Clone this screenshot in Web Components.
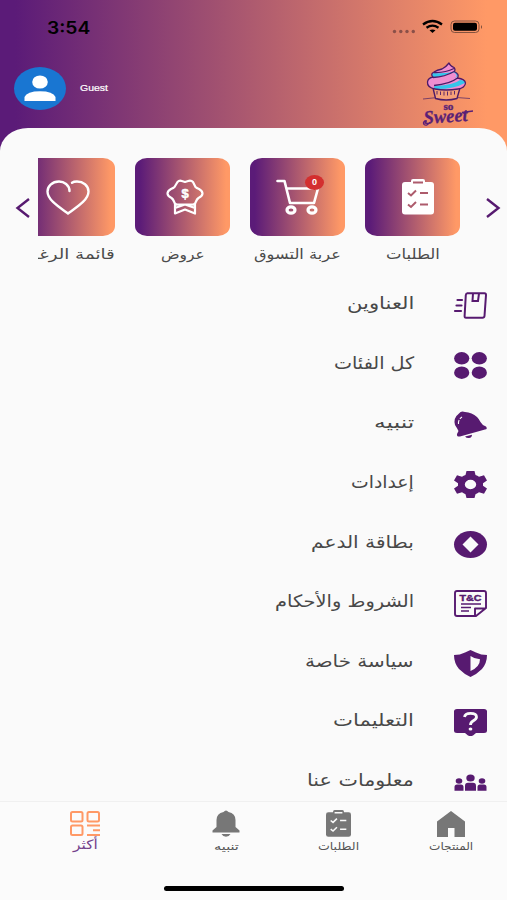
<!DOCTYPE html>
<html lang="ar">
<head>
<meta charset="utf-8">
<title>So Sweet</title>
<style>
    body {
        margin: 0;
        font-family: "DejaVu Sans", "Noto Sans", sans-serif;
    }
</style>
</head>
<body>
<more-screen></more-screen>
<script>
// one drawing per icon: [viewBox width, viewBox height, markup]
const icons = {
    heart: [44, 35, `<path d="M23.500 11C23.500 5 18 1.500 13 1.500C6 1.500 1.500 6.500 1.500 11.500C1.500 20 13 27 22 33.500C31 27 42.500 20 42.500 11.500C42.500 5.500 37 1.500 31 1.500C28.500 1.500 27 2 26 2.700" fill="none" stroke="#fff" stroke-width="2.400" stroke-linecap="round"/>`],
    offer: [38, 36, `<path d="M11.500 3Q13 1.400 15 1.800L19 3L23 1.800Q25.500 1.400 27 3L29.500 8Q30.500 9 33 10Q36.500 12 36.500 14.500Q36.500 17 32.500 19Q31 20 30 22.500Q29 26 26 25.500H12Q9 26 8 22.500Q7 20 5.500 19Q1.500 17 1.500 14.500Q1.500 12 5 10Q7.500 9 8.500 8ZM9 25V34.500L19 30.500L29 34.500V25M9 29L19 25.500L29 29" fill="none" stroke="#fff" stroke-width="2.200" stroke-linejoin="round"/><text x="19" y="19" font-size="13" font-weight="bold" text-anchor="middle" fill="#fff" stroke="#fff" stroke-width=".5" font-family="Liberation Sans">$</text>`],
    cart: [43, 36, `<g fill="none" stroke="#fff" stroke-width="2.600" stroke-linecap="round" stroke-linejoin="round"><path d="M1.500 2H8.500L14 24H38L42 9.500H11"/><ellipse cx="15" cy="31" rx="4" ry="3.200" stroke-width="3.200"/><ellipse cx="36" cy="31" rx="4" ry="3.200" stroke-width="3.200"/></g>`],
    clipboard: [32, 36, `<rect y="3" width="32" height="32.500" rx="3" fill="currentColor"/><rect x="9" y="0" width="14" height="6" rx="2" fill="currentColor"/><path d="M11 3.500H21M6 14L9 16.500L14 11.500M6 25.500L9 28L14 23M18 14H26M18 25.500H26" fill="none" stroke="var(--hole, #ad5b6c)" stroke-width="2"/>`],
    address: [33, 27, `<path d="M13 1.200H30.500Q32 1.200 32 3L30.500 24Q30.300 25.700 28.500 25.700H12Q10.500 25.700 10.600 24L11.800 3Q12 1.200 13.500 1.200ZM19 1.500L18.500 9H24L25 1.500" fill="none" stroke="currentColor" stroke-width="2"/><path d="M3.500 8H8M2.500 13.500H7.500M1 19H7" stroke="currentColor" stroke-width="2.200" stroke-linecap="round"/>`],
    grid: [33, 27, `<g fill="currentColor"><ellipse cx="7.700" cy="6.300" rx="7.600" ry="6.200"/><ellipse cx="25.300" cy="6.300" rx="7.600" ry="6.200"/><ellipse cx="7.700" cy="20.700" rx="7.600" ry="6.200"/><ellipse cx="25.300" cy="20.700" rx="7.600" ry="6.200"/></g>`],
    tilted: [33, 27, `<path d="M5 2.500Q7-.5 11 1Q18 1.500 23 6Q25 8 26.500 11Q28 14 32 15.500Q34 18 31 18.500L6 25.500Q2.500 26 3 23L4.500 20Q3 17 1 14Q-1 7 5 2.500Z" fill="currentColor"/><path d="M11 25.500L18 23.700Q18 26.800 15 27Q12.500 27.200 11 25.500Z" fill="currentColor"/><path d="M4.500 13Q4 8.500 8 6" fill="none" stroke="#fafafa" stroke-width="1.100" stroke-dasharray="4 1.500"/>`],
    gear: [33, 27, `<path fill="currentColor" fill-rule="evenodd" d="M12.500 0H20.500L21.500 4Q23.500 4.700 25 5.700L30 4.200L33 9.500L29 12.300V14.800L33 17.600L30 22.800L25 21.300Q23.500 22.500 21.500 23.200L20.500 27H12.500L11.500 23.200Q9.500 22.500 8 21.300L3 22.800L0 17.600L4 14.800V12.300L0 9.500L3 4.200L8 5.700Q9.500 4.700 11.500 4ZM16.500 8.800A5.700 4.700 0 1 0 16.500 18.200A5.700 4.700 0 1 0 16.500 8.800Z"/>`],
    support: [33, 27, `<ellipse cx="16.500" cy="13.500" rx="16.500" ry="13.500" fill="currentColor"/><path d="M16.500 5.500L24.500 13.500L16.500 21.500L8.500 13.500Z" fill="#fafafa"/>`],
    terms: [33, 27, `<path d="M1 3Q1 1 3 1H30Q32 1 32 3V18L22 26H3Q1 26 1 24ZM21 25.500V18.500H31.500" fill="none" stroke="currentColor" stroke-width="1.900" stroke-linejoin="round"/><path d="M7 14H27M7 17.500H17M7 21H15" stroke="currentColor" stroke-width="1.300"/><text x="5.500" y="10.800" font-size="8.500" font-weight="bold" textLength="22" lengthAdjust="spacingAndGlyphs" fill="currentColor" stroke="currentColor" stroke-width=".4" font-family="Liberation Sans">T&amp;C</text>`],
    shield: [33, 27, `<path d="M16.500 0L22 2.500Q27 5 33 5Q33 13 28 19Q23 24 16.500 27Q10 24 5 19Q0 13 0 5Q6 5 11 2.500Z" fill="currentColor"/><path d="M16.500 6Q20.500 9 26 9.300Q26 17 16.500 21Z" fill="#fafafa"/>`],
    help: [33, 27, `<path d="M3 0H30Q33 0 33 2.500V21.500Q33 24 30 24H22L19 26.500Q16.500 27.700 14 26.500L11 24H3Q0 24 0 21.500V2.500Q0 0 3 0Z" fill="currentColor"/><path d="M10.500 8Q11 4.300 16.500 4.300Q22.500 4.300 22.500 8Q22.500 10 19 12Q16.500 13.500 16.500 16" fill="none" stroke="#fafafa" stroke-width="2.800"/><ellipse cx="16.500" cy="20" rx="1.900" ry="1.600" fill="#fafafa"/>`],
    people: [33, 27, `<g fill="currentColor"><ellipse cx="16.500" cy="9" rx="4.200" ry="3.500"/><ellipse cx="5" cy="12" rx="3.300" ry="2.700"/><ellipse cx="28" cy="12" rx="3.300" ry="2.700"/><path d="M11 21.700V17Q11 13.700 14 13.700H19Q22 13.700 22 17V21.700ZM.5 21.700V18Q.5 15.500 3 15.500H7Q9.500 15.500 9.500 18V21.700ZM23.500 21.700V18Q23.500 15.500 26 15.500H30Q32.500 15.500 32.500 18V21.700Z"/></g>`],
    more: [30, 25, `<g fill="none" stroke="currentColor" stroke-width="2"><rect x="1" y="1" width="11.500" height="9.500" rx="1.500"/><rect x="17.500" y="1" width="11.500" height="9.500" rx="1.500"/><rect x="1" y="14.500" width="11.500" height="9.500" rx="1.500"/><path d="M17 14.500H30M23 19.300H30M17 24H30"/></g>`],
    bell: [28, 27, `<path d="M11.500 2Q14-1 16.500 2Q23.500 3.500 23.500 10V17L27.500 20.500V22.500H.5V20.500L4.500 17V10Q4.500 3.500 11.500 2ZM9.500 24H18.500Q17 26.800 14 26.800Q11 26.800 9.500 24Z" fill="currentColor"/>`],
    home: [28, 26, `<path d="M14 0L28 10.500V26H17.500V17H11V26H0V10.500Z" fill="currentColor"/>`],
    prev: [14, 20, `<path d="M13 1L1.500 10L13 19" fill="none" stroke="currentColor" stroke-width="2.400"/>`],
    next: [14, 20, `<path d="M1 1L12.500 10L1 19" fill="none" stroke="currentColor" stroke-width="2.400"/>`],
    avatar: [52, 43, `<ellipse cx="26" cy="21.500" rx="26" ry="21.500" fill="#1976d2"/><ellipse cx="26" cy="15" rx="7.800" ry="6.600" fill="#fff"/><path d="M10.500 34V30Q13 24.300 26 24.300Q39 24.300 41.500 30V34Z" fill="#fff"/>`],
    signal: [88, 14, `<g fill="#8a5048"><circle cx="2.500" cy="11.500" r="1.700"/><circle cx="8.800" cy="11.500" r="1.700"/><circle cx="15" cy="11.500" r="1.700"/><circle cx="21.300" cy="11.500" r="1.700"/></g><path d="M31 4.500Q40.500-2.500 50 4.500M34.500 7.700Q40.500 3.500 46.500 7.700" fill="none" stroke="#000" stroke-width="2.300"/><path d="M37.500 10.300Q40.500 8.500 43.500 10.300L40.500 13Z"/><rect x="59" y="1" width="28" height="11.500" rx="3.500" fill="none" stroke="#764b3a" stroke-width=".9"/><rect x="61" y="2.700" width="24" height="8.100" rx="2"/><path d="M89 5V9Q91 7 89 5Z" fill="#764b3a"/>`],
    logo: [54, 66, `
        <path d="M3 37Q25 34 50 36.500" stroke="#5d2d66" stroke-width=".8" fill="none"/>
        <path d="M13 26L15.500 36.500Q26 39.500 37 36.500L40 26Z" fill="#f5a078" stroke="#4c1a68" stroke-width="1.400"/>
        <path d="M17 29V32.500M20.500 29.500V33M24 29.500V33.500M27.500 29.500V33.500M31 29.500V33M34.500 29V32.500" stroke="#4c1a68" stroke-width=".9"/>
        <path d="M29 1Q30 4 34 5.500Q36 8 34 9.500Q40 12 37.500 16Q45 17 45.500 21Q45 26 38 27Q26 29 15 27Q7 25.500 7.500 20Q8 16 13 15Q10 12 14 10Q17 8 22 7Q26 5 29 1Z" fill="#f18ed0"/>
        <path d="M13 11Q26 12 35 9.500Q39 12 37.500 15Q25 17 12 20Q8 18 13 15Q11 13 13 11ZM15 24Q34 23 40 18Q46 18 45 21Q34 27 17 27Q12 26 15 24Z" fill="#34c5ea"/>
        <path d="M12 16Q24 14 34 10.500Q38 13 36 15Q26 21 9 21.500Q7 18 12 16Z" fill="#f18ed0"/>
        <path d="M29 1Q30 4 34 5.500Q36 8 34 9.500Q40 12 37.500 16Q45 17 45.500 21Q45 26 38 27Q26 29 15 27Q7 25.500 7.500 20Q8 16 13 15Q10 12 14 10Q17 8 22 7Q26 5 29 1ZM14 10.500Q25 11 34 6.500M13 15.500Q25 15 34 9.500M14 23.500Q30 22 37.500 16" fill="none" stroke="#4c1a68" stroke-width="1.300" stroke-linejoin="round"/>
        <g fill="#5a1f76" stroke="#5a1f76" stroke-width=".3" font-family="Liberation Serif" font-weight="bold">
            <text x="23.500" y="48" font-size="10" textLength="10" lengthAdjust="spacingAndGlyphs">so</text>
            <text x="4" y="62" font-size="19" font-style="italic" textLength="44" lengthAdjust="spacingAndGlyphs" transform="rotate(-4 4 62)">Sweet</text>
        </g>
        <path d="M42 50.500L53 49M7 59Q2 59 4 62.500Q7 64.500 10 60" fill="none" stroke="#5a1f76" stroke-width="1.300"/>`],
};

class UiIcon extends HTMLElement {
    connectedCallback() {
        const [w, h, body] = icons[this.getAttribute('name')];
        const width = this.getAttribute('w') || w;
        const height = this.getAttribute('h') || h;
        this.attachShadow({ mode: "open" }).innerHTML = /*html*/`
            <style>
                :host { display: block; flex: none; width: ${width}px; height: ${height}px; }
                svg { display: block; width: 100%; height: 100%; overflow: visible; }
            </style>
            <svg viewBox="0 0 ${w} ${h}" preserveAspectRatio="none">${body}</svg>
        `;
    }
}

// label that stretches its text to the width given in "w"
class FitLabel extends HTMLElement {
    connectedCallback() {
        const w = Number(this.getAttribute('w'));
        this.attachShadow({ mode: "open" }).innerHTML = /*html*/`
            <style>
                :host { display: block; flex: none; width: ${w}px; direction: ltr; white-space: nowrap; }
                span { display: inline-block; transform-origin: 0 50%; }
            </style>
            <span dir="auto"><slot></slot></span>
        `;
        const span = this.shadowRoot.querySelector('span');
        span.style.transform = `scaleX(${w / span.offsetWidth})`;
    }
}

class TopHeader extends HTMLElement {
    constructor() {
        super();
        this.attachShadow({ mode: "open" }).innerHTML = /*html*/`
            <style>
                :host { display: block; height: 128px; }
                .status {
                    display: flex;
                    justify-content: space-between;
                    padding: 17px 27px 0 47px;
                    height: 22px;
                    font: 600 17px/22px Inter, sans-serif;
                }
                .status ui-icon { margin-top: 3px; }
                .user {
                    display: flex;
                    align-items: flex-start;
                    padding: 23px 33px 0 14px;
                }
                .avatar { margin-top: 5px; }
                .name {
                    margin: 19px auto 0 14px;
                    color: #fff;
                    font: 9px/14px "Liberation Sans", sans-serif;
                    -webkit-text-stroke: .2px #fff;
                }
            </style>
            <div class="status">
                <fit-label w="43">3:54</fit-label>
                <ui-icon name="signal"></ui-icon>
            </div>
            <div class="user">
                <ui-icon class="avatar" name="avatar"></ui-icon>
                <fit-label class="name" w="28">Guest</fit-label>
                <ui-icon name="logo"></ui-icon>
            </div>
        `;
    }
}

class ShortcutCard extends HTMLElement {
    connectedCallback() {
        const badge = this.getAttribute('badge');
        this.attachShadow({ mode: "open" }).innerHTML = /*html*/`
            <style>
                :host { display: flex; flex-direction: column; align-items: center; flex: none; width: 95px; }
                :host([long]) { align-items: flex-start; }
                .tile {
                    position: relative;
                    display: flex;
                    align-items: center;
                    justify-content: center;
                    width: 95px;
                    height: 78px;
                    border-radius: 12px / 10px;
                    background: linear-gradient(90deg, #5b1b78 5%, #ff9966 96%);
                    color: #fff;
                }
                .tile ui-icon { translate: var(--shift, 0) 0; }
                .badge {
                    position: absolute;
                    left: 55px;
                    top: 17px;
                    width: 19px;
                    height: 15px;
                    border-radius: 50%;
                    background: #d32f2f;
                    font: bold 9px/15px "Liberation Sans", sans-serif;
                    text-align: center;
                }
                .label { margin-top: 7px; font-size: 14px; line-height: 22px; color: #4b4b4b; }
            </style>
            <div class="tile">
                <ui-icon name="${this.getAttribute('icon')}"></ui-icon>
                ${badge ? `<span class="badge">${badge}</span>` : ''}
            </div>
            <fit-label class="label" w="${this.getAttribute('w')}">${this.textContent}</fit-label>
        `;
    }
}

class ShortcutStrip extends HTMLElement {
    constructor() {
        super();
        this.attachShadow({ mode: "open" }).innerHTML = /*html*/`
            <style>
                :host {
                    display: flex;
                    justify-content: space-between;
                    padding: 30px 7px 0 16px;
                    height: 114px;
                    color: #571a70;
                }
                .arrow { margin-top: 40px; }
                .track {
                    display: flex;
                    direction: rtl;
                    gap: 20px;
                    width: 422px;
                    margin: 0 26px 0 8px;
                    overflow: hidden;
                }
            </style>
            <ui-icon class="arrow" name="prev"></ui-icon>
            <div class="track"><slot></slot></div>
            <ui-icon class="arrow" name="next"></ui-icon>
        `;
    }
}

class MenuRow extends HTMLElement {
    connectedCallback() {
        this.attachShadow({ mode: "open" }).innerHTML = /*html*/`
            <style>
                :host {
                    display: flex;
                    justify-content: flex-end;
                    gap: 40px;
                    height: 59.65px;
                    padding-right: 20.5px;
                    color: #571a70;
                }
                .label { font-size: 17px; line-height: 24px; margin-top: -1px; color: #484848; }
            </style>
            <fit-label class="label" w="${this.getAttribute('w')}">${this.textContent}</fit-label>
            <ui-icon name="${this.getAttribute('icon')}"></ui-icon>
        `;
    }
}

class TabItem extends HTMLElement {
    connectedCallback() {
        this.attachShadow({ mode: "open" }).innerHTML = /*html*/`
            <style>
                :host { display: flex; flex-direction: column; align-items: center; color: #777; }
                :host([active]) { color: #ff9966; }
                .pic { display: flex; align-items: center; height: 27px; --hole: #fafafa; }
                .label { font-size: 11px; line-height: 18px; margin-top: 1px; color: #555; }
                :host([active]) .label { color: #74418b; font-size: 13px; margin-top: -1px; }
            </style>
            <div class="pic"><ui-icon name="${this.getAttribute('icon')}" ${this.hasAttribute('narrow') ? 'w="25" h="27"' : ''}></ui-icon></div>
            <fit-label class="label" w="${this.getAttribute('w')}">${this.textContent}</fit-label>
        `;
    }
}

class TabBar extends HTMLElement {
    constructor() {
        super();
        this.attachShadow({ mode: "open" }).innerHTML = /*html*/`
            <style>
                :host { display: block; height: 99px; background: #fbfbfb; border-top: 1px solid #f0f0f0; box-sizing: border-box; }
                .tabs { display: grid; grid-template-columns: 170px 112px 113px 112px; height: 76px; padding-top: 8px; box-sizing: border-box; }
                .home { width: 180px; height: 5px; margin: 8px auto 0 164px; border-radius: 3px; background: #000; }
            </style>
            <div class="tabs"><slot></slot></div>
            <div class="home"></div>
        `;
    }
}

class MoreScreen extends HTMLElement {
    constructor() {
        super();
        this.attachShadow({ mode: "open" }).innerHTML = /*html*/`
            <style>
                :host {
                    display: flex;
                    flex-direction: column;
                    width: 507px;
                    height: 900px;
                    overflow: hidden;
                    background: linear-gradient(90deg, #5b1b78 3%, #ff9966 96%);
                }
                main {
                    flex: 1;
                    min-height: 0;
                    overflow: hidden;
                    border-radius: 28px 28px 0 0 / 23px 23px 0 0;
                    background: #fafafa;
                }
                .list { margin-top: 20px; }
            </style>
            <top-header></top-header>
            <main>
                <shortcut-strip>
                    <shortcut-card icon="clipboard" w="54" style="--shift: 5px">الطلبات</shortcut-card>
                    <shortcut-card icon="cart" w="87" badge="0">عربة التسوق</shortcut-card>
                    <shortcut-card icon="offer" w="44" style="--shift: 2px">عروض</shortcut-card>
                    <shortcut-card icon="heart" w="104" long>قائمة الرغبات</shortcut-card>
                </shortcut-strip>
                <div class="list">
                    <menu-row icon="address" w="67">العناوين</menu-row>
                    <menu-row icon="grid" w="80">كل الفئات</menu-row>
                    <menu-row icon="tilted" w="40">تنبيه</menu-row>
                    <menu-row icon="gear" w="63">إعدادات</menu-row>
                    <menu-row icon="support" w="103">بطاقة الدعم</menu-row>
                    <menu-row icon="terms" w="139">الشروط والأحكام</menu-row>
                    <menu-row icon="shield" w="109">سياسة خاصة</menu-row>
                    <menu-row icon="help" w="81">التعليمات</menu-row>
                    <menu-row icon="people" w="107">معلومات عنا</menu-row>
                </div>
            </main>
            <tab-bar>
                <tab-item icon="more" w="25" active>أكثر</tab-item>
                <tab-item icon="bell" w="25">تنبيه</tab-item>
                <tab-item icon="clipboard" w="41" narrow>الطلبات</tab-item>
                <tab-item icon="home" w="44">المنتجات</tab-item>
            </tab-bar>
        `;
    }
}

customElements.define("ui-icon", UiIcon);
customElements.define("fit-label", FitLabel);
customElements.define("top-header", TopHeader);
customElements.define("shortcut-card", ShortcutCard);
customElements.define("shortcut-strip", ShortcutStrip);
customElements.define("menu-row", MenuRow);
customElements.define("tab-item", TabItem);
customElements.define("tab-bar", TabBar);
customElements.define("more-screen", MoreScreen);
</script>
</body>
</html>
